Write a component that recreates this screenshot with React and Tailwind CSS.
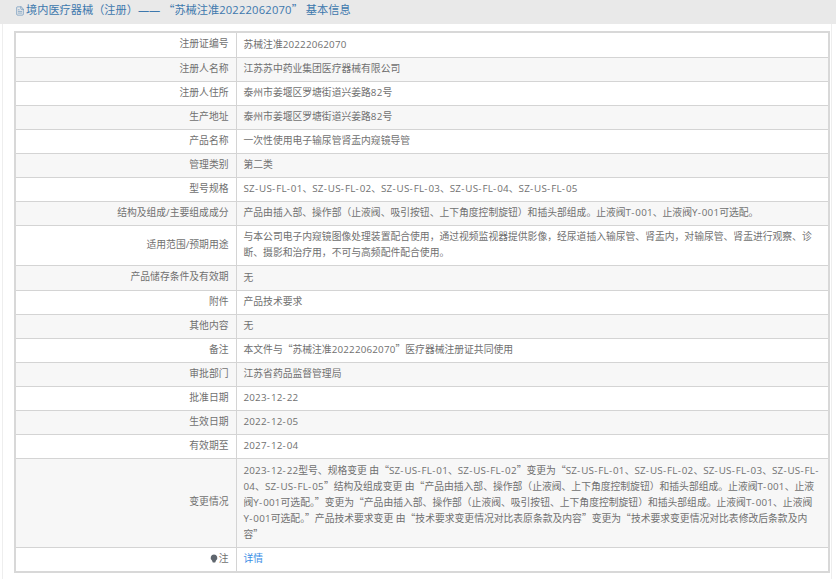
import { FileText } from 'lucide-react'

const rows = [
  ['注册证编号', '苏械注准20222062070', 'h-[25px]'],
  ['注册人名称', '江苏苏中药业集团医疗器械有限公司'],
  ['注册人住所', '泰州市姜堰区罗塘街道兴姜路82号'],
  ['生产地址', '泰州市姜堰区罗塘街道兴姜路82号'],
  ['产品名称', '一次性使用电子输尿管肾盂内窥镜导管'],
  ['管理类别', '第二类'],
  ['型号规格', 'SZ-US-FL-01、SZ-US-FL-02、SZ-US-FL-03、SZ-US-FL-04、SZ-US-FL-05'],
  ['结构及组成/主要组成成分', '产品由插入部、操作部（止液阀、吸引按钮、上下角度控制旋钮）和插头部组成。止液阀T-001、止液阀Y-001可选配。'],
  ['适用范围/预期用途', '与本公司电子内窥镜图像处理装置配合使用，通过视频监视器提供影像，经尿道插入输尿管、肾盂内，对输尿管、肾盂进行观察、诊断、摄影和治疗用，不可与高频配件配合使用。'],
  ['产品储存条件及有效期', '无', 'h-[25px]'],
  ['附件', '产品技术要求'],
  ['其他内容', '无'],
  ['备注', '本文件与“苏械注准20222062070”医疗器械注册证共同使用'],
  ['审批部门', '江苏省药品监督管理局'],
  ['批准日期', '2023-12-22'],
  ['生效日期', '2022-12-05'],
  ['有效期至', '2027-12-04'],
  ['变更情况', '2023-12-22型号、规格变更 由“SZ-US-FL-01、SZ-US-FL-02”变更为“SZ-US-FL-01、SZ-US-FL-02、SZ-US-FL-03、SZ-US-FL-04、SZ-US-FL-05”结构及组成变更 由“产品由插入部、操作部（止液阀、上下角度控制旋钮）和插头部组成。止液阀T-001、止液阀Y-001可选配。”变更为“产品由插入部、操作部（止液阀、吸引按钮、上下角度控制旋钮）和插头部组成。止液阀T-001、止液阀Y-001可选配。”产品技术要求变更 由“技术要求变更情况对比表原条款及内容”变更为“技术要求变更情况对比表修改后条款及内容”', 'h-[89px]'],
]

// quotes come from the CJK font so they take a full box, latin runs a bit wider
function Value({ text }) {
  return text.split(/([“”-]|[A-Za-z0-9]+)/).map((part, i) => {
    if (part === '“' || part === '”') {
      return <span key={i} className="font-['Noto_Sans_CJK_SC'] leading-none">{part}</span>
    }
    if (part === '-') {
      return <span key={i} className="tracking-[1px]">-</span>
    }
    if (/^[A-Za-z0-9]+$/.test(part)) {
      return <span key={i} className="tracking-[0.2px]">{part}</span>
    }
    return part
  })
}

export default function App() {
  return (
    <div className="h-[579px] w-[836px] overflow-hidden bg-white font-['Open_Sans','Noto_Sans_CJK_SC',sans-serif] text-[9.8px] text-[#707070]">
      <div className="flex h-6 items-center gap-px bg-[#e9e9e9] pb-[3px] pl-[15px] text-[11.2px] text-[#3d78ad]">
        <FileText className="h-[10px] w-[10px]" strokeWidth={1.25} />
        <span>境内医疗器械（注册）—— <Value text="“苏械注准20222062070”" /> 基本信息</span>
      </div>
      <div className="ml-[2px] mr-[4px] h-[555px] border-r border-l border-[#eeeeee] pt-[7px] pr-[1px] pl-[11px]">
        <table className="w-[816px] table-fixed border-collapse border-2 border-[#d8d8d8]">
          <colgroup>
            <col className="w-[221px]" />
            <col />
          </colgroup>
          <tbody>
            {rows.map(([label, value, height]) => (
              <tr key={label} className={`border-b border-[#d4d4d4] even:bg-[#f7f7f7] ${height || ''}`}>
                <th className="border-r border-[#d4d4d4] pr-[7px] text-right font-normal">{label}</th>
                <td className="px-[7px] py-[3.5px] leading-4"><Value text={value} /></td>
              </tr>
            ))}
            <tr>
              <th className="border-r border-[#d4d4d4] pr-[7px] text-right font-normal">
                <svg viewBox="0 0 8 9" className="mr-px inline-block h-[9px] w-[8px] align-[-1px]">
                  <path d="M4 .5a3.4 3.4 0 0 1 2 6.1L5.2 8.5H2.8L2 6.6A3.4 3.4 0 0 1 4 .5z" fill="#5f666e" />
                </svg>
                注
              </th>
              <td className="px-[7px] py-[3.5px] leading-4 text-[#3a8ee6]">详情</td>
            </tr>
          </tbody>
        </table>
      </div>
    </div>
  )
}
